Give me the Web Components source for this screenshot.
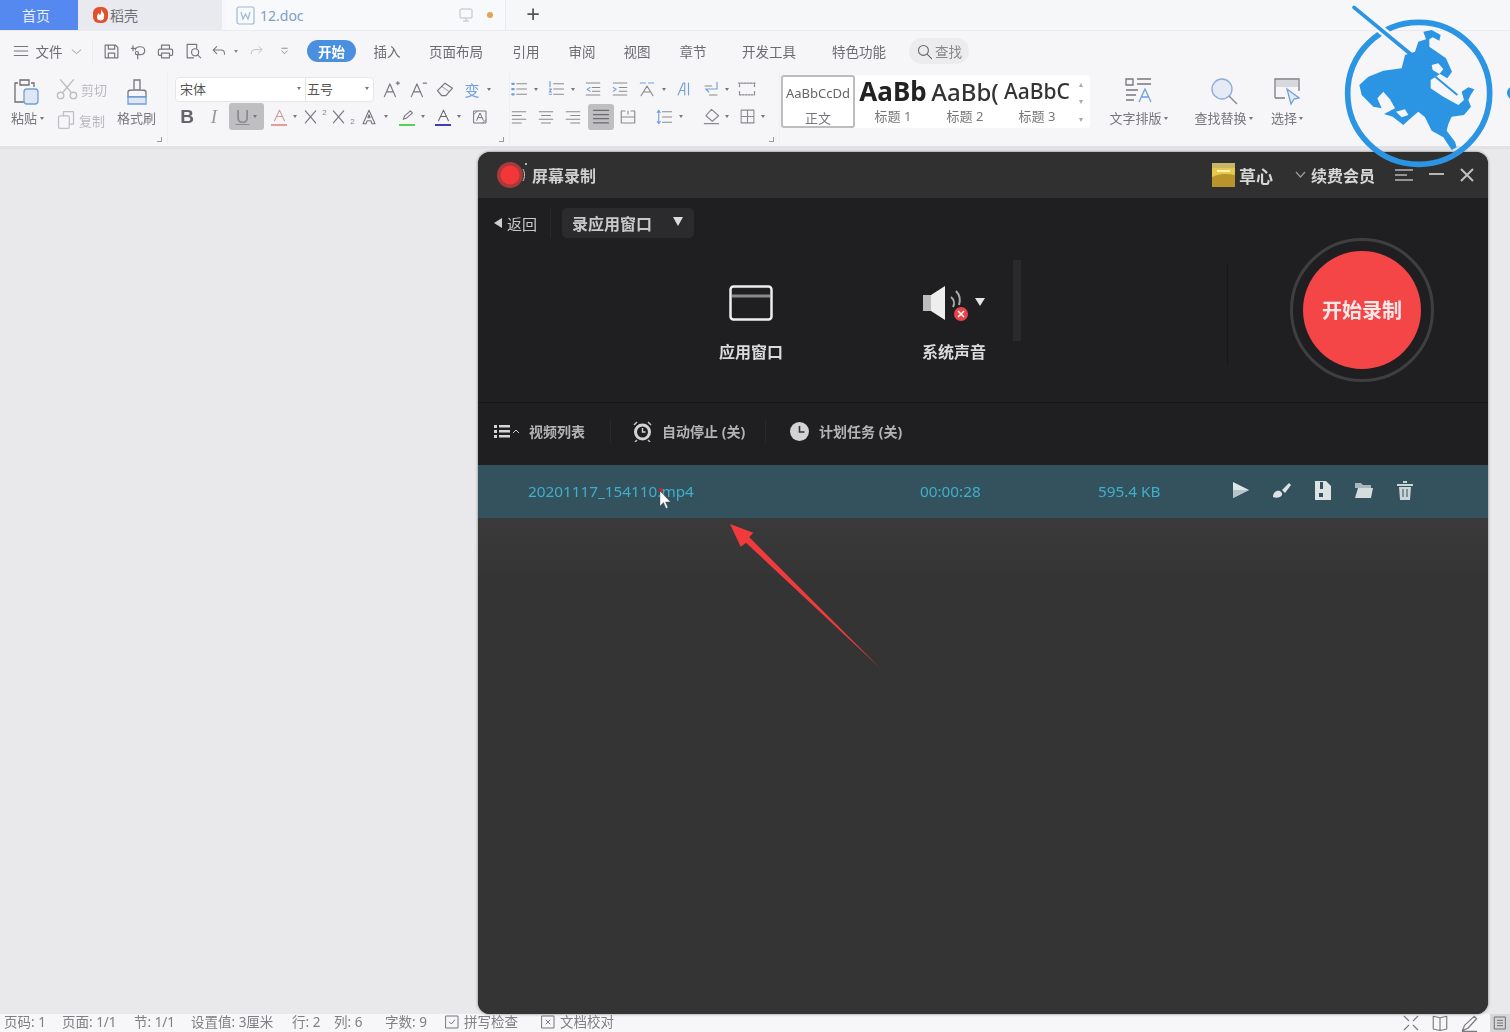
<!DOCTYPE html>
<html lang="zh">
<head>
<meta charset="utf-8">
<title>屏幕录制</title>
<style>
    html, body { margin: 0; height: 100%; overflow: hidden; background: #e9e9eb; }
    body { font-family: "Noto Sans", "Noto Sans CJK SC", sans-serif; }
</style>
</head>
<body>
<wps-app>
    <wps-tabs></wps-tabs>
    <wps-menu></wps-menu>
    <wps-ribbon></wps-ribbon>
    <div style="flex:1"></div>
    <wps-status></wps-status>
</wps-app>
<rec-window>
    <rec-title></rec-title>
    <rec-source></rec-source>
    <rec-tools></rec-tools>
    <rec-list></rec-list>
</rec-window>
<over-marks></over-marks>

<script>
const BLUE = "#6fa0dd";
// stroke icons for the wps ribbon, drawn on a 24 box
const ICONS = {
    burger: '<path d="M3 6h18M3 12h18M3 18h18"/>',
    chev: '<path d="M4 9l8 7 8-7"/>',
    save: '<path d="M4 4h13l3 3v13H4zM8 4v5h8V4M8 20v-6h8v6"/>',
    lasso: '<path d="M8 10a6 5 0 1 1 6 6h-3v5M3 8h5M5 5v6"/><circle cx="10" cy="14" r="2"/>',
    print: '<path d="M7 9V4h10v5M7 17H5a2 2 0 0 1-2-2v-4a2 2 0 0 1 2-2h14a2 2 0 0 1 2 2v4a2 2 0 0 1-2 2h-2M7 14h10v6H7z"/>',
    preview: '<path d="M12 20H4V3h12v5"/><circle cx="14" cy="13" r="4.5"/><path d="M17 16l4 4"/>',
    undo: '<path d="M8 5l-5 5 5 5M3 10h11a5 5 0 0 1 5 5v1"/>',
    redo: '<path d="M16 5l5 5-5 5M21 10H10a5 5 0 0 0-5 5v1"/>',
    more: '<path d="M7 6h10M7 11l5 5 5-5"/>',
    search: '<circle cx="10.5" cy="10.5" r="7"/><path d="M16 16l6 6"/>',
    a_up: '<path d="M3 21L10 5l7 16M6 15h8M18 4h4M20 2v4"/>',
    a_down: '<path d="M3 21L10 5l7 16M6 15h8M18 4h4"/>',
    eraser: '<path d="M3 14l9-9 9 6-8 9H8z"/><path d="M8 9l9 6" opacity=".5"/>',
    a_line: '<path d="M5 18L12 3l7 15M8 12h8"/>',
    a_out: '<path d="M4 21L12 3l8 18h-4l-1.5-4h-5L8 21zM10.500 13h3L12 9z"/>',
    sup: '<path d="M3 5l13 15M16 5L3 20"/>',
    cut: '<path d="M5 2l11 13M19 2L8 15"/><circle cx="5" cy="19" r="3.500"/><circle cx="19" cy="19" r="3.500"/>',
    copy: '<path d="M9 7V2h12v15h-5"/><rect x="3" y="7" width="13" height="15" rx="2"/>',
    pencil: '<path d="M6 16l2-5 8-7 3 3-8 7z"/>',
    boxa: '<path d="M3 3h18v18H3zM7 17l5-11 5 11M9 13h6M3 8l5-5M16 21l5-5"/>',
    ul_b: `<path d="M9 5h13M9 12h13M9 19h13"/><path d="M3 5h2M3 12h2M3 19h2" stroke="${BLUE}" stroke-width="3"/>`,
    ol_b: `<path d="M9 5h13M9 12h13M9 19h13"/><path d="M4 2v7M3 12h3l-3 4h3M3 19h3" stroke="${BLUE}" stroke-width="1.600"/>`,
    outdent: `<path d="M3 4h18M11 10h10M11 15h10M3 20h18"/><path d="M8 10l-4 2.500 4 2.500" stroke="${BLUE}"/>`,
    indent: `<path d="M3 4h18M11 10h10M11 15h10M3 20h18"/><path d="M3 10l4 2.500-4 2.500" stroke="${BLUE}"/>`,
    sort: `<path d="M3 4h7M14 4h7" stroke="${BLUE}"/><path d="M4 21l8-13 8 13M7 16h10"/>`,
    aligntext: '<path d="M4 20L11 4h2v16M8 14h5M18 4v16"/>',
    wrap: `<path d="M4 8h9"/><path d="M20 3v9H6M9 16l-4-4" stroke="${BLUE}"/><path d="M10 20h10"/>`,
    dashbox: '<path d="M2 5h20M3 9v-4M21 9V5M3 19h18M3 15v4M21 15v4" stroke-dasharray="2 1.500"/>',
    al: '<path d="M3 5h18M3 10h12M3 15h18M3 20h12"/>',
    ac: '<path d="M3 5h18M6 10h12M3 15h18M6 20h12"/>',
    ar: '<path d="M3 5h18M9 10h12M3 15h18M9 20h12"/>',
    just: '<path d="M3 4h18M3 9h18M3 14h18M3 19h18"/>',
    dist: '<path d="M3 4v16h18V4M3 4h5M16 4h5M3 12h18M12 4v4"/>',
    lines: `<path d="M10 5h12M10 12h12M10 19h12"/><path d="M5 3v18M3 6l2-3 2 3M3 18l2 3 2-3" stroke="${BLUE}"/>`,
    fill: '<path d="M12 3l9 8-8 7-8-7zM3 21h18"/>',
    grid: '<path d="M3 3h18v18H3zM3 12h18M12 3v18"/>',
    check: '<path d="M3 3h18v18H3zM8 12l3 3 5-6"/>',
    cross: '<path d="M3 3h18v18H3zM9 9l6 6M15 9l-6 6"/>',
    full: '<path d="M3 3l6 6M21 3l-6 6M3 21l6-6M21 21l-6-6"/>',
    book: '<path d="M12 5L3 3v17l9 2 9-2V3zM12 5v17"/>',
    pen: '<path d="M3 21l3-7L18 3l3 3L10 18zM3 22h18"/>',
    page: '<path d="M4 3h16v18H4zM8 8h8M8 12h8M8 16h8"/>'
};

class UiIcon extends HTMLElement {
    constructor() {
        super();
        const size = this.getAttribute("size") || 20;
        const color = this.getAttribute("color") || "#77777c";
        const width = this.getAttribute("weight") || 1.5;
        this.attachShadow({ mode: "open" }).innerHTML = `
            <style>:host { display: inline-flex; flex: none; }</style>
            <svg width="${size}" height="${size}" viewBox="0 0 24 24" fill="none" stroke="${color}"
                 stroke-width="${width}" stroke-linejoin="round" stroke-linecap="round">${ICONS[this.getAttribute("name")] || ""}</svg>`;
    }
}
customElements.define("ui-icon", UiIcon);

// small dropdown dot used all over the ribbon
const DOT = '<span class="dot"></span>';
const icon = (name, size, color, weight) =>
    `<ui-icon name="${name}" size="${size || 20}"${color ? ` color="${color}"` : ""}${weight ? ` weight="${weight}"` : ""}></ui-icon>`;

// lays out cells centred on the given page x, in a flex row starting at originX
function centredRow(originX, cells) {
    let right = originX;
    let html = "";
    for (const [cx, content, w] of cells) {
        const width = w || 24;
        const left = cx - width / 2;
        html += `<span class="cell" style="width:${width}px;margin-left:${left - right}px">${content}</span>`;
        right = left + width;
    }
    return html;
}

class WpsApp extends HTMLElement {
    constructor() {
        super();
        this.attachShadow({ mode: "open" }).innerHTML = `
            <style>
                :host { display: flex; flex-direction: column; height: 1032px; background: #e9e9eb;
                    filter: blur(.4px); }
            </style>
            <slot></slot>`;
    }
}
customElements.define("wps-app", WpsApp);

class WpsTabs extends HTMLElement {
    constructor() {
        super();
        this.attachShadow({ mode: "open" }).innerHTML = `
            <style>
                :host { display: flex; height: 31px; background: #f6f7f9; border-bottom: 1px solid #ebebef;
                    font-size: 14px; color: #6f6f74; box-sizing: border-box; }
                .home { width: 78px; background: #5689f0; color: #e8efff; display: flex; align-items: center;
                    justify-content: center; padding-right: 6px; box-sizing: border-box; }
                .shell { width: 144px; background: #e8eaf0; display: flex; align-items: center; gap: 2px;
                    padding-left: 15px; box-sizing: border-box; }
                .doc { width: 280px; margin-left: 4px; display: flex; align-items: center; padding-left: 10px;
                    box-sizing: border-box; color: #7e9fc8; background: #f8f9fb; border-right: 1px solid #e8e9ee; gap: 5px; }
                .doc b { font-weight: 400; flex: 1; }
                .doc i { width: 6px; height: 6px; background: #e8a155; border-radius: 50%; margin: 0 12px 0 9px; }
                .plus { width: 54px; text-align: center; font-size: 24px; line-height: 28px; color: #555; }
            </style>
            <div class="home">首页</div>
            <div class="shell">
                <svg width="15" height="16" viewBox="0 0 15 16"><rect width="15" height="16" rx="6" fill="#e2502c"/>
                    <path d="M8 2c1 3 4 4 3 8a3.500 3.500 0 0 1-7 0c0-2 1-3 2-4 0 1 .5 2 1 2 1-1 1.500-3 1-6z" fill="#fff"/></svg>
                <span>稻壳</span>
            </div>
            <div class="doc">
                <svg width="19" height="19" viewBox="0 0 19 19" fill="none" stroke="#9db8d8" stroke-width="1.200">
                    <rect x="1" y="1" width="17" height="17" rx="2"/><path d="M5 6l2 7 2.500-5 2.500 5 2-7"/></svg>
                <b>12.doc</b>
                <svg width="14" height="14" viewBox="0 0 14 14" fill="none" stroke="#b9bdc4"><rect x="1" y="1" width="12" height="9" rx="1"/><path d="M7 10v3M4 13h6"/></svg>
                <i></i>
            </div>
            <div class="plus">+</div>`;
    }
}
customElements.define("wps-tabs", WpsTabs);

class WpsMenu extends HTMLElement {
    constructor() {
        super();
        const tabs = [["插入", 62], ["页面布局", 76], ["引用", 64], ["审阅", 48], ["视图", 62], ["章节", 50], ["开发工具", 102], ["特色功能", 78]];
        this.attachShadow({ mode: "open" }).innerHTML = `
            <style>
                :host { display: flex; align-items: center; height: 41px; padding-bottom: 1px; box-sizing: border-box; background: #f6f6f9;
                    font-size: 13.500px; color: #6c6c70; }
                .cell { display: inline-flex; align-items: center; justify-content: center; flex: none; }
                .sep { width: 1px; height: 24px; background: #ececef; }
                .pill { width: 49px; height: 22px; background: #4a8fe0; border-radius: 11px; color: #fff;
                    font-weight: 700; display: flex; align-items: center; justify-content: center; flex: none; }
                .tab { text-align: center; flex: none; }
                .find { margin-left: 11px; width: 60px; height: 26px; border-radius: 13px; background: #ececef;
                    display: flex; align-items: center; justify-content: center; gap: 2px; color: #888; flex: none; }
                .dot { width: 0; height: 0; border: 2.500px solid transparent; border-top: 3px solid #888; border-bottom: 0; }
            </style>
            ${centredRow(0, [
                [21, icon("burger", 18)],
                [49, "文件", 30],
                [76, icon("chev", 13, "#8a8a90")],
                [92, '<span class="sep"></span>', 1],
                [111, icon("save", 19)],
                [138, icon("lasso", 19)],
                [165, icon("print", 19)],
                [193, icon("preview", 19)],
                [219, icon("undo", 17)],
                [236, DOT, 6],
                [256, icon("redo", 16, "#c3c3c8")],
                [284, icon("more", 13)]
            ])}
            <span class="pill" style="margin-left:11px">开始</span>
            ${tabs.map(([t, w]) => `<span class="tab" style="width:${w}px">${t}</span>`).join("")}
            <span class="find">${icon("search", 17, "#66666a")}查找</span>`;
    }
}
customElements.define("wps-menu", WpsMenu);

class WpsRibbon extends HTMLElement {
    constructor() {
        super();
        const bl = BLUE;
        const gr = "#8a8a8e";
        this.attachShadow({ mode: "open" }).innerHTML = `
            <style>
                :host { display: flex; height: 74px; background: #f6f6f9; border-bottom: 3px solid #e2e2e4; box-sizing: content-box;
                    font-size: 13px; color: #77777b; position: relative; }
                .group { display: flex; flex: none; position: relative; box-sizing: border-box; }
                .cell { display: inline-flex; align-items: center; justify-content: center; flex: none; height: 100%; }
                .dot { width: 0; height: 0; border: 2px solid transparent; border-top: 3px solid #777; border-bottom: 0; }
                .col { display: flex; flex-direction: column; align-items: center; gap: 1px; flex: none; }
                .col span { white-space: nowrap; line-height: 18px; }
                .corner { position: absolute; right: 5px; bottom: 2px; width: 4px; height: 4px;
                    border-right: 1px solid #999; border-bottom: 1px solid #999; }
                .clip { width: 168px; padding: 5px 0 0 8px; gap: 10px; border-right: 1px solid #efeff2; height: 72px; }
                .clip .col { gap: 2px; }
                .pair { display: flex; flex-direction: column; gap: 7px; width: 56px; color: #b9b9bd; }
                .pair div { display: flex; align-items: center; gap: 3px; height: 24px; }
                .font, .para { flex-direction: column; padding-top: 4px; }
                .font { width: 342px; border-right: 1px solid #efeff2; height: 72px; }
                .para { width: 270px; padding-left: 0; border-right: 1px solid #efeff2; height: 72px; }
                .row { display: flex; height: 26px; align-items: center; }
                .row.low { height: 27px; margin-top: 1px; }
                .sel { display: flex; width: 199px; height: 25px; margin-left: 7px; flex: none; background: #fff;
                    border: 1px solid #e6e6e9; border-radius: 4px; box-sizing: border-box; color: #555; align-items: center; }
                .sel > span { display: flex; align-items: center; justify-content: space-between; padding: 0 4px 2px; box-sizing: border-box; height: 100%; }
                .sel .a { width: 130px; border-right: 1px solid #e6e6e9; }
                .sel .b { flex: 1; padding-left: 1px; }
                .b-btn { font: 700 19px "Liberation Sans", sans-serif; color: #66666a; }
                .i-btn { font: italic 19px "Liberation Serif", serif; color: #99999d; }
                .u-btn { width: 35px; height: 27px; background: #bfbfc1; border-radius: 3px; display: flex; align-items: center;
                    justify-content: center; gap: 4px; color: #8a8a90; font: 19px "Liberation Sans", sans-serif; text-decoration: underline; }
                .ua { display: flex; flex-direction: column; align-items: center; line-height: 0; }
                .ua i { display: block; width: 16px; height: 2px; margin-top: -1px; }
                .script { font: 8px "Liberation Sans", sans-serif; color: #88888c; align-self: flex-start; margin-top: 5px; }
                .styles { width: 309px; height: 53px; margin: 3px 0 0 1px; background: #fff; border-radius: 3px;
                    display: flex; flex: none; }
                .st { width: 72px; height: 100%; box-sizing: border-box; display: flex; flex-direction: column; align-items: center;
                    flex: none; overflow: hidden; }
                .st.on { width: 74px; border: 2px solid #bdbdc0; border-radius: 3px; margin-right: 2px; }
                .st em { font: normal 13px/33px "Noto Sans", sans-serif; height: 33px; color: #666; white-space: nowrap; }
                .st span { line-height: 16px; }
                .scroll { width: 16px; display: flex; flex-direction: column; align-items: center; justify-content: space-around; color: #aaa; font-size: 8px; line-height: 10px; }
                .tools { display: flex; margin-left: 17px; padding-top: 4px; flex: none; }
                .tools .col { gap: 3px; }
            </style>
            <div class="group clip">
                <div class="col">
                    <svg width="28" height="30" viewBox="0 0 28 30" fill="none" stroke="#6d6d72" stroke-width="1.300">
                        <path d="M6 6H3v19h9M19 6h3v4M8 3h9v5H8z"/><rect x="12" y="12" width="14" height="15" rx="3" fill="#dfe7f3" stroke="${bl}"/></svg>
                    <span style="margin-left:3px">粘贴<span class="dot" style="display:inline-block;margin:0 0 3px 3px"></span></span>
                </div>
                <div class="pair" style="margin-left:2px">
                    <div>${icon("cut", 22, "#bdbdc1")}剪切</div>
                    <div>${icon("copy", 20, "#c0c0c4")}复制</div>
                </div>
                <div class="col" style="margin-left:-5px">
                    <svg width="26" height="30" viewBox="0 0 26 30" fill="none" stroke="#77777c" stroke-width="1.300">
                        <path d="M10 13V3h6v10M4 15c0-2 2-2 6-2h6c4 0 6 0 6 2v5H4z"/><path d="M4 20h18v7H4z" fill="#dfe7f3" stroke="${bl}"/></svg>
                    <span>格式刷</span>
                </div>
                <i class="corner"></i>
            </div>
            <div class="group font">
                <div class="row">
                    <div class="sel"><span class="a">宋体${DOT}</span><span class="b">五号${DOT}</span></div>
                    ${centredRow(374, [
                        [391, icon("a_up", 19)],
                        [418, icon("a_down", 19)],
                        [445, icon("eraser", 20)],
                        [472, `<span style="color:${bl};font-size:15px">变</span>`],
                        [489, DOT, 6]
                    ])}
                </div>
                <div class="row low">
                    ${centredRow(168, [
                        [187, '<span class="b-btn">B</span>'],
                        [214, '<span class="i-btn">I</span>'],
                        [246.500, `<span class="u-btn">U${DOT}</span>`, 35],
                        [279, `<span class="ua">${icon("a_line", 17, "#c89a9a")}<i style="background:#e79a9a"></i></span>`],
                        [295, DOT, 6],
                        [315, icon("sup", 19) + '<span class="script">2</span>'],
                        [343, icon("sup", 19) + '<span class="script" style="align-self:flex-end;margin:0 0 4px">2</span>'],
                        [369, icon("a_out", 18)],
                        [386, DOT, 6],
                        [407, `<span class="ua">${icon("pencil", 17)}<i style="background:#55d255"></i></span>`],
                        [423, DOT, 6],
                        [443, `<span class="ua">${icon("a_line", 17, "#66666c")}<i style="background:#3d3dc0"></i></span>`],
                        [459, DOT, 6],
                        [480, icon("boxa", 16)]
                    ])}
                </div>
                <i class="corner"></i>
            </div>
            <div class="group para">
                <div class="row">
                    ${centredRow(510, [
                        [519, icon("ul_b", 18, gr)],
                        [536, DOT, 6],
                        [556, icon("ol_b", 18, gr)],
                        [573, DOT, 6],
                        [593, icon("outdent", 18, gr)],
                        [620, icon("indent", 18, gr)],
                        [647, icon("sort", 18, gr)],
                        [664, DOT, 6],
                        [684, icon("aligntext", 18, bl)],
                        [711, icon("wrap", 18, gr)],
                        [727, DOT, 6],
                        [747, icon("dashbox", 20, gr)]
                    ])}
                </div>
                <div class="row low">
                    ${centredRow(510, [
                        [519, icon("al", 18, gr)],
                        [546, icon("ac", 18, gr)],
                        [573, icon("ar", 18, gr)],
                        [601, `<span style="width:26px;height:26px;background:#bfbfc1;border-radius:3px;display:flex;align-items:center;justify-content:center">${icon("just", 20, "#6b6b6f")}</span>`, 26],
                        [628, icon("dist", 18, gr)],
                        [664, icon("lines", 18, gr)],
                        [681, DOT, 6],
                        [711, icon("fill", 19, gr)],
                        [727, DOT, 6],
                        [747, icon("grid", 17, gr)],
                        [763, DOT, 6]
                    ])}
                </div>
                <i class="corner"></i>
            </div>
            <div class="styles">
                <div class="st on"><em>AaBbCcDd</em><span>正文</span></div>
                <div class="st"><em style="font-size:26px;font-weight:700;color:#222">AaBb</em><span>标题 1</span></div>
                <div class="st"><em style="font-size:24px;color:#333;font-weight:500">AaBb(</em><span>标题 2</span></div>
                <div class="st"><em style="font-size:21px;color:#333;font-weight:500">AaBbC</em><span>标题 3</span></div>
                <div class="scroll"><span>▴</span><span>▾</span><span>▾</span></div>
            </div>
            <div class="tools">
                <div class="col" style="width:63px">
                    <svg width="30" height="30" viewBox="0 0 30 30" fill="none" stroke="#77777c" stroke-width="1.300">
                        <path d="M2 3h7v6H2zM13 3h14M13 8h14M2 14h12M2 19h10M2 24h8"/><path d="M15 26l6-13 6 13M17 21h8" stroke="${bl}"/></svg>
                    <span>文字排版<span class="dot" style="display:inline-block;margin:0 0 3px 2px"></span></span>
                </div>
                <div class="col" style="width:63px;margin-left:22px">
                    <svg width="30" height="30" viewBox="0 0 30 30" fill="none" stroke="#8a8a90" stroke-width="1.400">
                        <circle cx="13" cy="13" r="10" fill="#e5ebf5" stroke="#8eaee0"/><path d="M20 20l8 8"/></svg>
                    <span>查找替换<span class="dot" style="display:inline-block;margin:0 0 3px 2px"></span></span>
                </div>
                <div class="col" style="width:36px;margin-left:14px">
                    <svg width="30" height="30" viewBox="0 0 30 30" fill="none" stroke="#7d7d82" stroke-width="1.300">
                        <path d="M3 22V3h24v12M3 22h10"/><rect x="4" y="4" width="22" height="7" fill="#d8d8da" stroke="none"/>
                        <path d="M15 13l12 9-5 1-3 5z" fill="#e5ebf5" stroke="${bl}"/></svg>
                    <span>选择<span class="dot" style="display:inline-block;margin:0 0 3px 2px"></span></span>
                </div>
            </div>`;
    }
}
customElements.define("wps-ribbon", WpsRibbon);

class WpsStatus extends HTMLElement {
    constructor() {
        super();
        const texts = [[4, "页码: 1"], [62, "页面: 1/1"], [134, "节: 1/1"], [191, "设置值: 3厘米"], [292, "行: 2"], [334, "列: 6"], [385, "字数: 9"]];
        let html = "";
        for (let i = 0; i < texts.length; i++) {
            html += `<span style="width:${i + 1 < texts.length ? texts[i + 1][0] - texts[i][0] : 59}px;${i ? "" : "margin-left:4px"}">${texts[i][1]}</span>`;
        }
        this.attachShadow({ mode: "open" }).innerHTML = `
            <style>
                :host { display: flex; align-items: center; height: 18px; background: #f7f7f9; font-size: 13.500px; color: #808084;
                    white-space: nowrap; }
                span { flex: none; display: inline-flex; align-items: center; height: 18px; line-height: 14px; padding-bottom: 3px; box-sizing: border-box; }
                .chk { gap: 4px; }
                .right { margin-left: auto; display: flex; align-items: center; gap: 11px; padding-right: 0; }
                .on { background: #d6d6d8; width: 20px; height: 18px; justify-content: center; padding: 0; }
            </style>
            ${html}
            <span class="chk" style="width:96px">${icon("check", 16)}拼写检查</span>
            <span class="chk">${icon("cross", 16)}文档校对</span>
            <div class="right">
                ${icon("full", 18, "#7a7a7e")}${icon("book", 18, "#7a7a7e")}${icon("pen", 19, "#7a7a7e")}
                <span class="on">${icon("page", 16, "#6e6e72")}</span>
            </div>`;
    }
}
customElements.define("wps-status", WpsStatus);

class RecWindow extends HTMLElement {
    constructor() {
        super();
        this.attachShadow({ mode: "open" }).innerHTML = `
            <style>
                :host { position: absolute; left: 478px; top: 152px; width: 1010px; height: 862px; display: flex;
                    flex-direction: column; border-radius: 12px; overflow: hidden; background: #343434;
                    box-shadow: 0 0 3px rgba(0,0,0,.5); filter: blur(.4px);
                    font-family: "Noto Sans", "Noto Sans CJK SC", sans-serif; }
            </style>
            <slot></slot>`;
    }
}
customElements.define("rec-window", RecWindow);

class RecTitle extends HTMLElement {
    constructor() {
        super();
        this.attachShadow({ mode: "open" }).innerHTML = `
            <style>
                :host { display: flex; align-items: center; height: 46px; background: #303031; color: #d8d8d8; flex: none;
                    padding-left: 18px; font-weight: 700; white-space: nowrap; }
                .name { font-size: 16px; margin-left: 4px; color: #cfcfcf; }
                .me { margin-left: auto; font-size: 17px; color: #d6d6d6; display: flex; align-items: center; gap: 4px; }
                .vip { font-size: 16px; margin-left: 22px; display: flex; align-items: center; gap: 5px; color: #d6d6d6; }
                .ctl { display: flex; align-items: center; margin: 0 14px 0 20px; gap: 16px; }
            </style>
            <svg width="32" height="28" viewBox="0 0 32 28">
                <circle cx="14" cy="14" r="13" fill="#a83a3a"/><circle cx="14" cy="14" r="9.500" fill="#f2363a"/>
                <path d="M27 8c2 4 2 8 0 12" stroke="#c9c9c9" fill="none"/><circle cx="30" cy="3" r="1" fill="#ddd"/></svg>
            <span class="name">屏幕录制</span>
            <span class="me">
                <svg width="23" height="24" viewBox="0 0 23 24"><rect width="23" height="24" fill="#e6c84a"/><rect width="23" height="5" fill="#c9b56a"/>
                    <path d="M0 14c6-3 14-4 23-2v12H0z" fill="#b8942a"/><path d="M5 8h13" stroke="#fff4b0" stroke-width="2"/></svg>
                草心
            </span>
            <span class="vip">
                <svg width="11" height="8" viewBox="0 0 11 8" fill="none" stroke="#9a9a9a" stroke-width="1.300"><path d="M1 1l4.500 5L10 1"/></svg>
                续费会员
            </span>
            <span class="ctl">
                <svg width="18" height="14" viewBox="0 0 18 14" fill="none" stroke="#b5b5b5" stroke-width="1.600"><path d="M0 2h18M0 7h12M0 12h18"/></svg>
                <svg width="15" height="14" viewBox="0 0 15 14" fill="none" stroke="#b5b5b5" stroke-width="2"><path d="M0 6h15"/></svg>
                <svg width="14" height="14" viewBox="0 0 14 14" fill="none" stroke="#c0c0c0" stroke-width="2"><path d="M1 1l12 12M13 1L1 13"/></svg>
            </span>`;
    }
}
customElements.define("rec-title", RecTitle);

class RecSource extends HTMLElement {
    constructor() {
        super();
        this.attachShadow({ mode: "open" }).innerHTML = `
            <style>
                :host { display: block; height: 205px; background: #1f1f21; border-bottom: 1px solid #161618; flex: none;
                    box-sizing: border-box; color: #d9d9d9; font-weight: 700; white-space: nowrap; }
                .head { display: flex; align-items: center; height: 30px; padding: 10px 0 0 16px; }
                .back { font-size: 15px; font-weight: 400; color: #c8c8c8; display: flex; align-items: center; gap: 5px; }
                .line { width: 1px; height: 30px; background: #29292b; margin: 0 11px 0 13px; }
                .pick { width: 132px; height: 30px; box-sizing: border-box; background: #2b2b2d; border-radius: 5px; font-size: 16px;
                    color: #c9c9c9; display: flex; align-items: center; justify-content: space-between; padding: 0 11px 0 10px; }
                .pick svg { margin-top: -4px; }
                .body { display: flex; height: 155px; }
                .item { width: 100px; flex: none; display: flex; flex-direction: column; align-items: center; font-size: 16px; color: #dadada; }
                .ico { height: 44px; margin-top: 43px; display: flex; align-items: center; margin-bottom: 14px; position: relative; }
                .strip { width: 8px; height: 81px; background: #2a2a2c; margin: 22px 0 0 9px; flex: none; }
                .div { width: 1px; height: 102px; background: #171719; margin: 26px 0 0 206px; flex: none; }
                .ring { width: 144px; height: 144px; box-sizing: border-box; border: 3px solid #3f3f41; border-radius: 50%;
                    margin: 0 0 0 62px; display: flex; align-items: center; justify-content: center; flex: none; }
                .go { width: 118px; height: 118px; border-radius: 50%; background: #f44547; color: #fde9e9; font-size: 20px;
                    display: flex; align-items: center; justify-content: center; padding-bottom: 1px; box-sizing: border-box; }
            </style>
            <div class="head">
                <span class="back">
                    <svg width="8" height="10" viewBox="0 0 8 10"><path d="M8 0v10L0 5z" fill="#cfcfcf"/></svg>
                    返回
                </span>
                <span class="line"></span>
                <span class="pick">录应用窗口
                    <svg width="10" height="9" viewBox="0 0 10 9"><path d="M0 0h10L5 9z" fill="#dcdcdc"/></svg>
                </span>
            </div>
            <div class="body">
                <div class="item" style="margin-left:223px">
                    <div class="ico">
                        <svg width="44" height="36" viewBox="0 0 44 36" fill="none"><rect x="1.500" y="1.500" width="41" height="33" rx="3" stroke="#eee" stroke-width="2.500"/>
                            <path d="M3 11h38" stroke="#8a8a8a" stroke-width="3"/></svg>
                    </div>
                    应用窗口
                </div>
                <div class="item" style="margin-left:103px">
                    <div class="ico">
                        <svg width="64" height="36" viewBox="0 0 64 36">
                            <path d="M1 10h8L23 1v34L9 26H1z" fill="#eee"/><path d="M1 10h8v16H1z" fill="#bdbdbd"/>
                            <path d="M29 12a8 8 0 0 1 2 10M34 6a14 14 0 0 1 3 14" fill="none" stroke="#aaa" stroke-width="2"/>
                            <circle cx="39" cy="29" r="7" fill="#e8434a"/><path d="M36 26l6 6M42 26l-6 6" stroke="#fff" stroke-width="1.500"/>
                            <path d="M53 13h10l-5 8z" fill="#e5e5e5"/></svg>
                    </div>
                    系统声音
                </div>
                <div class="strip"></div>
                <div class="div"></div>
                <div class="ring"><div class="go">开始录制</div></div>
            </div>`;
    }
}
customElements.define("rec-source", RecSource);

class RecTools extends HTMLElement {
    constructor() {
        super();
        const clock = `<svg width="19" height="19" viewBox="0 0 19 19"><circle cx="9.500" cy="9.500" r="9.500" fill="#d2d2d2"/><path d="M9.500 4v6h5" stroke="#333" stroke-width="1.600" fill="none"/></svg>`;
        const alarm = `<svg width="19" height="21" viewBox="0 0 19 21"><circle cx="9.500" cy="11" r="7" fill="#1f1f21" stroke="#d2d2d2" stroke-width="3"/><path d="M9.500 7v4h3" stroke="#d2d2d2" stroke-width="1.400" fill="none"/><path d="M1 4l3-3M18 4l-3-3M4 19l-2 2M15 19l2 2" stroke="#c0c0c0" stroke-width="1.500"/></svg>`;
        this.attachShadow({ mode: "open" }).innerHTML = `
            <style>
                :host { display: flex; align-items: center; height: 62px; background: #1f1f21; flex: none; padding: 0 0 6px 16px;
                    font-size: 14px; font-weight: 700; color: #b4b4b4; white-space: nowrap; box-sizing: border-box; }
                .lead { display: flex; align-items: center; gap: 3px; margin-right: 10px; }
                .sep { width: 1px; height: 24px; background: #29292b; flex: none; }
                .t { display: flex; align-items: center; gap: 10px; }
            </style>
            <span class="lead">
                <svg width="16" height="15" viewBox="0 0 16 15" fill="#d5d5d5"><path d="M0 1h3v3H0zM5 1h11v2.500H5zM0 6h3v3H0zM5 6h11v2.500H5zM0 11h3v3H0zM5 11h11v2.500H5z"/></svg>
                <svg width="6" height="4" viewBox="0 0 6 4" fill="none" stroke="#ccc"><path d="M0 4l3-3 3 3"/></svg>
            </span>
            <span style="width:81px">视频列表</span>
            <span class="sep"></span>
            <span class="t" style="margin-left:22px;width:132px">${alarm}自动停止 (关)</span>
            <span class="sep"></span>
            <span class="t" style="margin-left:24px">${clock}计划任务 (关)</span>`;
    }
}
customElements.define("rec-tools", RecTools);

class RecList extends HTMLElement {
    constructor() {
        super();
        this.attachShadow({ mode: "open" }).innerHTML = `
            <style>
                :host { display: flex; flex-direction: column; flex: 1; background: #343434; }
                .row { display: flex; align-items: center; height: 53px; background: #33525d; color: #3fb0cb; font-size: 15.300px;
                    padding: 0 0 1px 50px; box-sizing: border-box; white-space: nowrap; flex: none; }
                .name { width: 392px; }
                .time { width: 178px; }
                .size { width: 134px; }
                .acts { display: flex; align-items: center; margin-top: -2px; }
                .acts svg { flex: none; }
                .alt { height: 56px; background: linear-gradient(#3a3a3a, #353535); flex: none; }
            </style>
            <div class="row">
                <span class="name">20201117_154110.mp4</span>
                <span class="time">00:00:28</span>
                <span class="size">595.4 KB</span>
                <span class="acts">
                    <svg width="18" height="18" viewBox="0 0 18 18"><path d="M1 1l16 8-16 8z" fill="#dfe6e8"/><path d="M1 9h16l-16 8z" fill="#b5c4c8"/></svg>
                    <svg width="20" height="18" viewBox="0 0 20 18" style="margin-left:22px"><path d="M10 9l7-7 2 2-6 8zM1 16c0-4 3-7 7-6l2 2c1 3-3 6-9 4z" fill="#dbe3e5"/></svg>
                    <svg width="18" height="19" viewBox="0 0 18 19" style="margin-left:22px"><path d="M1 0h11l5 5v14H1z" fill="#dbe3e5"/><path d="M6 1h3v7H6zM5 12h4v4H5z" fill="#33525d"/></svg>
                    <svg width="20" height="17" viewBox="0 0 20 17" style="margin-left:22px"><path d="M1 1h6l2 2h8v3H1z" fill="#a9b8bc"/><path d="M4 6h15l-2 10H1z" fill="#d4dcde"/></svg>
                    <svg width="16" height="19" viewBox="0 0 16 19" style="margin-left:23px"><path d="M0 3h16v2H0zM6 0h4v2H6z" fill="#cbd5d7"/><path d="M2 6h12l-1 13H3z" fill="#cbd5d7"/><path d="M6 8v8M10 8v8" stroke="#33525d"/></svg>
                </span>
            </div>
            <div class="alt"></div>`;
    }
}
customElements.define("rec-list", RecList);

// things painted on top of the screen recording: logo stamp, arrow and cursor
class OverMarks extends HTMLElement {
    constructor() {
        super();
        this.attachShadow({ mode: "open" }).innerHTML = `
            <style>
                :host { position: absolute; left: 0; top: 0; width: 1510px; height: 1032px; display: block; pointer-events: none; }
                svg { position: absolute; left: 0; top: 0; }
            </style>
            <svg width="1510" height="1032" viewBox="0 0 1510 1032">
                <g transform="translate(1340 0) scale(.33333)" fill="#2b95e4">
                    <circle cx="236" cy="280" r="213" fill="none" stroke="#2b95e4" stroke-width="17"/>
                    <path d="M42 22L215 165" stroke="#f6f6f9" stroke-width="26" fill="none"/>
                    <path d="M42 22L215 165" stroke="#2b95e4" stroke-width="11" stroke-linecap="round" fill="none"/>
                    <path d="M250 95L275 90 302 105 298 122 278 112 268 118 268 140 290 155 318 175 336 215 322 235 300 222 272 240 272 265 310 290 355 315 372 300 365 275 385 262 403 268 392 285 385 300 393 320 372 345 335 350 325 372 320 392 345 425 350 442 335 450 310 412 275 392 255 352 235 335 212 355 190 375 158 350 132 342 165 325 150 298 130 275 112 295 125 325 100 320 65 285 58 255 85 230 130 212 185 205 195 165 225 155 235 125 258 118z"/>
                    <path d="M275 195L295 190 310 208 298 222 278 210zM168 335L195 328 205 345 185 352z" fill="#f6f6f9"/>
                    <path d="M268 215L352 285" stroke="#2b95e4" stroke-width="6" fill="none"/>
                    <path d="M510 262C498 272 498 285 510 296z"/>
                </g>
                <path d="M730 524L753.300 532.700 749.300 537.300 879.500 667.500 746 542.700 740.700 546.700z" fill="#f13a3b"/>
                <path d="M660 491v15l3.500-3.500 2.500 6 2-1-2.500-5.500h5z" fill="#fff" stroke="#444" stroke-width=".4"/>
                <circle cx="661" cy="490" r="2" fill="#c8283a"/>
            </svg>`;
    }
}
customElements.define("over-marks", OverMarks);
</script>
</body>
</html>
